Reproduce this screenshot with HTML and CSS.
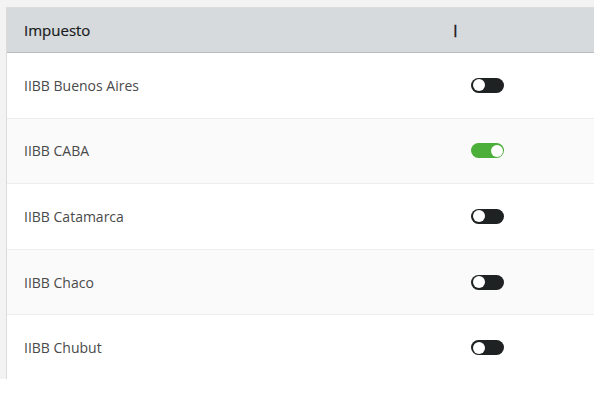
FILE: index.html
```html
<!DOCTYPE html>
<html lang="es">

<head>
    <meta charset="UTF-8" />
    <meta name="viewport" content="width=device-width, initial-scale=1.0" />
    <title>Impuestos</title>
    <link rel="stylesheet" href="styles.css">
</head>

<body>
    <div class="frame">
        <div class="tax-table">
            <div class="row head">
                <div class="cell name">Impuesto</div>
                <div class="cell flag">I</div>
            </div>

            <div class="row">
                <div class="cell name">IIBB Buenos Aires</div>
                <div class="cell switch-cell"><span class="switch"></span></div>
            </div>
            <div class="row alt">
                <div class="cell name">IIBB CABA</div>
                <div class="cell switch-cell"><span class="switch on"></span></div>
            </div>
            <div class="row">
                <div class="cell name">IIBB Catamarca</div>
                <div class="cell switch-cell"><span class="switch"></span></div>
            </div>
            <div class="row alt">
                <div class="cell name">IIBB Chaco</div>
                <div class="cell switch-cell"><span class="switch"></span></div>
            </div>
            <div class="row">
                <div class="cell name">IIBB Chubut</div>
                <div class="cell switch-cell"><span class="switch"></span></div>
            </div>
        </div>
    </div>
</body>

</html>
```

FILE: styles.css
```css
body {
    margin: 0;
    background: white;
    font-family: "Open Sans", Arial, sans-serif;
}

.frame {
    width: 594px;
    height: 379px;
    box-sizing: border-box;
    padding: 7px 0 0 6px;
    background-color: #f3f3f3;
    overflow: hidden;
}

.tax-table {
    background: white;
    border-left: 1px solid #dcdcdc;
    border-top: 1px solid #dcdcdc;
    height: 100%;
}

.row {
    display: grid;
    grid-template-columns: 434px 1fr;
    align-items: center;
    height: 64.6px;
    border-bottom: 1px solid #ececf1;
    font-size: 14px;
    color: #4a4a4a;
}

.row.alt {
    background-color: #fafafa;
}

.row.head {
    height: 44px;
    background-color: #d6dadd;
    border-bottom: 1px solid #b8bdc1;
    font-size: 15px;
    font-weight: 500;
    color: #1a1a1a;
    -webkit-text-stroke: 0.2px #1a1a1a;
}

.cell.name {
    padding-left: 17px;
}

.cell.flag {
    padding-left: 12px;
    font-size: 17px;
    -webkit-text-stroke: 0.3px #1a1a1a;
}

.switch-cell {
    padding-left: 30px;
    display: flex;
}

.switch {
    position: relative;
    width: 33px;
    height: 15px;
    border-radius: 8px;
    background-color: #1f2223;
}

.switch::after {
    content: "";
    position: absolute;
    top: 1.5px;
    left: 1.5px;
    width: 12px;
    height: 12px;
    border-radius: 50%;
    background: white;
}

.switch.on {
    background-color: #4caf3a;
}

.switch.on::after {
    left: auto;
    right: 1.5px;
}
```
